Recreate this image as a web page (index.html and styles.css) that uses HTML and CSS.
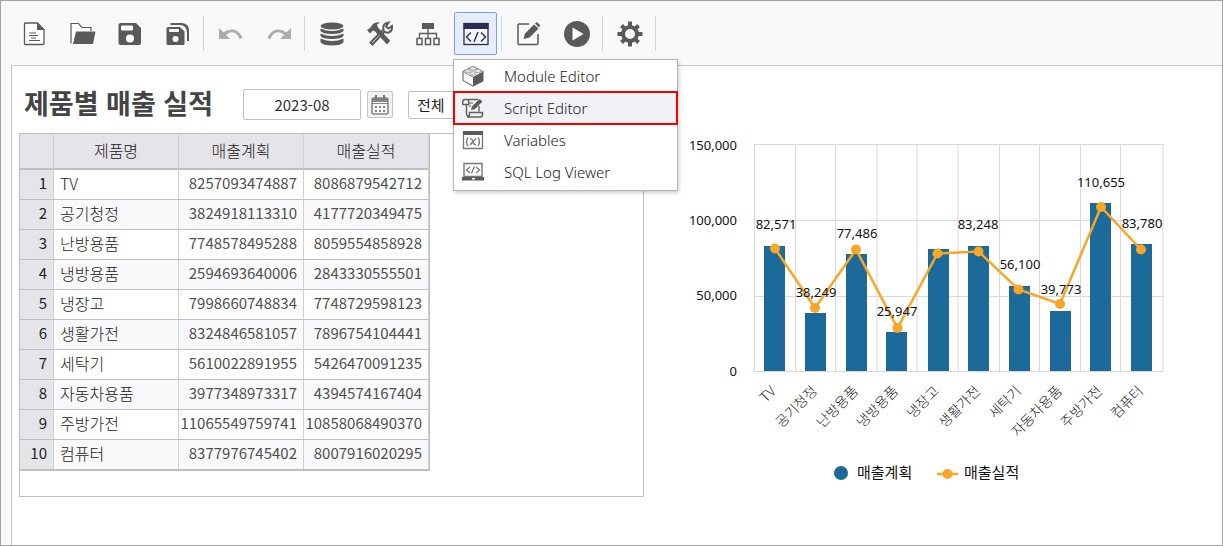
FILE: index.html
```
<!DOCTYPE html>
<html lang="ko">
<head>
  <meta charset="UTF-8" />
  <title>제품별 매출 실적</title>
  <link rel="stylesheet" href="styles.css">
</head>
<body>
  <!-- Toolbar -->
  <div class="toolbar">
    <div class="tool-group">
      <button class="tool" aria-label="New">
        <svg width="28" height="28" viewBox="0 0 28 28"><path d="M4.500 3h13l6.500 6.500v14q0 1-1 1H5.500q-1 0-1-1V4q0-1 1-1z" fill="#fff" stroke="#5a5a5a" stroke-width="1.300"/><path d="M17 3v7h7z" fill="#5a5a5a"/><path d="M9 13h7M9 15.500h9M11 18h5M9 20.500h11" stroke="#5a5a5a" stroke-width="1.200"/></svg>
      </button>
      <button class="tool" aria-label="Open">
        <svg width="28" height="28" viewBox="0 0 28 28"><path d="M3 23.500V3.500h7.500l3.500 4h9V11" fill="#fff" stroke="#5a5a5a" stroke-width="1.200"/><path d="M8 11.500H27.500L25 24H5z" fill="#5a5a5a"/></svg>
      </button>
      <button class="tool" aria-label="Save">
        <svg width="28" height="28" viewBox="0 0 28 28"><path d="M4.500 3H20l5 5v15q0 2-2 2H4.500q-2 0-2-2V5q0-2 2-2z" fill="#5a5a5a"/><rect x="5" y="5.500" width="12" height="5" rx="1" fill="#fff"/><circle cx="14" cy="18.500" r="4" fill="#fff"/></svg>
      </button>
      <button class="tool" aria-label="Save all">
        <svg width="28" height="28" viewBox="0 0 28 28"><path d="M6.500 3H18q7 1 7 7v11h-2v-9q-1-7-7-7H6.500z" fill="#5a5a5a"/><path d="M4 7h12l4.500 4.500V23.500q0 1.500-1.500 1.500H4q-1.500 0-1.500-1.500v-15Q2.500 7 4 7z" fill="#5a5a5a"/><rect x="5" y="9" width="10" height="3" rx="1" fill="#fff"/><circle cx="11.500" cy="19" r="3" fill="#fff"/></svg>
      </button>
    </div>
    <span class="divider"></span>
    <div class="tool-group">
      <button class="tool" aria-label="Undo" disabled>
        <svg width="28" height="28" viewBox="0 0 28 28"><path d="M2 8v11h11l-4-4q3-3.500 7.500-2.500 4 1 6 6.500l3-1q-3-7.500-9-8.500-5.500-.6-10 2.700z" fill="#adadad"/></svg>
      </button>
      <button class="tool" aria-label="Redo" disabled>
        <svg width="28" height="28" viewBox="0 0 28 28"><path d="M26 8v11H15l4-4q-3-3.500-7.500-2.500-4 1-6 6.500l-3-1q3-7.500 9-8.500 5.500-.6 10 2.700z" fill="#adadad"/></svg>
      </button>
    </div>
    <span class="divider"></span>
    <div class="tool-group">
      <button class="tool" aria-label="Database">
        <svg width="28" height="28" viewBox="0 0 28 28"><ellipse cx="14" cy="6" rx="11.500" ry="3.500" fill="#5a5a5a"/><path d="M2.500 8.500q11.500 5 23 0v2.500q-2 3-11.500 3T2.500 11zM2.500 13.500q11.500 5 23 0V16q-2 3-11.500 3T2.500 16zM2.500 18.500q11.500 5 23 0V22q-2 3.500-11.500 3.500T2.500 22z" fill="#5a5a5a"/></svg>
      </button>
      <button class="tool" aria-label="Tools">
        <svg width="28" height="28" viewBox="0 0 28 28"><path d="M1 10l3-2 3-4q3-2.500 7-1.500l-3 2 1 3 12 13-3 4-12-13-2-1-3 3z" fill="#5a5a5a"/><path d="M4.500 22.500l13-13q-1-4 2-6l3-.8-2.500 3.800 2.500 2 3.500-2.500q.5 4.500-2.500 6t-5-.500l-12 13z" fill="#fff" stroke="#5a5a5a" stroke-width="2"/><path d="M12 11l11 11" stroke="#5a5a5a" stroke-width="3"/></svg>
      </button>
      <button class="tool" aria-label="Structure">
        <svg width="28" height="28" viewBox="0 0 28 28"><rect x="8" y="3" width="12" height="6" fill="#5a5a5a"/><path d="M14 9v9M5.500 18v-4.500h17V18" fill="none" stroke="#5a5a5a" stroke-width="1.300"/><g fill="#fff" stroke="#5a5a5a" stroke-width="1.500"><rect x="3" y="18.500" width="5" height="6"/><rect x="11.500" y="18.500" width="5" height="6"/><rect x="20" y="18.500" width="5" height="6"/></g></svg>
      </button>
      <div class="tool-menu">
        <button class="tool active" aria-label="Code" aria-expanded="true">
          <svg width="28" height="28" viewBox="0 0 28 28"><rect x="2" y="3.500" width="24" height="21" fill="#f1f4fd" stroke="#2b2d4f" stroke-width="1.300"/><path d="M1.500 3h25v6h-25z" fill="#2b2d4f"/><path d="M9 12.500l-4.500 4.500L9 21.500M19 12.500l4.500 4.500-4.500 4.500M16 12l-4 10" fill="none" stroke="#2b2d4f" stroke-width="1.400"/></svg>
        </button>
        <ul class="menu">
          <li><button class="menu-item">
            <svg width="22" height="22" viewBox="0 0 22 22"><path d="M1 6.500l10-5 10 5v9.500L11 21 1 15.500z" fill="#fff" stroke="#777" stroke-width="1.200"/><path d="M11 12l10-5.500V16l-10 5z" fill="#5a5a5a"/><path d="M1 7l10 5" fill="none" stroke="#888"/><g fill="#e4e4e4" stroke="#999" stroke-width=".8"><ellipse cx="11" cy="3.500" rx="3" ry="1.800"/><ellipse cx="6" cy="6" rx="3" ry="1.800"/><ellipse cx="16" cy="6" rx="3" ry="1.800"/><ellipse cx="11" cy="8.500" rx="3" ry="1.800"/></g></svg>
            Module Editor</button></li>
          <li><button class="menu-item selected">
            <svg width="22" height="22" viewBox="0 0 22 22"><path d="M4.500 8V17q0 2 2.500 2h1M16 2.500H3Q.8 2.500.8 5v2.500h6V5q0-2.500-2-2.500M17 9v5.500M7.500 15.500V17q0 3-2.500 3h13.500q2 0 2-2.500v-2z" fill="none" stroke="#606060" stroke-width="1.400"/><path d="M9 13l1-3.500L17.500 2 20.500 4.500l-7.500 7.500z" fill="#5a5a5a"/><path d="M7 6h4M7 9h2" stroke="#606060" stroke-width="1.200"/></svg>
            Script Editor</button></li>
          <li><button class="menu-item">
            <svg width="22" height="22" viewBox="0 0 22 22"><path d="M1.500 3h19v16.500h-19z" fill="#fff" stroke="#777" stroke-width="1.300"/><path d="M1 2h20v4H1z" fill="#5a5a5a"/><path d="M6 8.500q-3 4.500 0 8.500M16 8.500q3 4.500 0 8.500M8 10q2-.5 2.500 1.500l1 2.500q.5 2 2.500 1.500M14 9.500L8 16" fill="none" stroke="#777" stroke-width="1.400"/></svg>
            Variables</button></li>
          <li><button class="menu-item">
            <svg width="22" height="22" viewBox="0 0 22 22"><path d="M2 2.500h18v13H2z" fill="#fff" stroke="#777" stroke-width="1.400"/><path d="M0 16h22v3.500H0z" fill="#5a5a5a"/><path d="M10 17h3v1.500h-3z" fill="#fff"/><path d="M8 6L4.500 9 8 12M14 6l3.500 3-3.500 3M12.500 5.500l-3 7" fill="none" stroke="#777" stroke-width="1.300"/></svg>
            SQL Log Viewer</button></li>
        </ul>
      </div>
    </div>
    <span class="divider"></span>
    <div class="tool-group">
      <button class="tool" aria-label="Edit">
        <svg width="28" height="28" viewBox="0 0 28 28"><path d="M14 4H4Q3 4 3 5v18.500q0 1 1 1h18q1 0 1-1V14" fill="none" stroke="#5a5a5a" stroke-width="1.500"/><path d="M8.500 19l1.500-5.500L19 4.500l4.500 4-9 9zM20 3.500l.8-.8q1-.8 2 0l1.800 1.800q.8 1 0 2l-.6 1z" fill="#5a5a5a"/></svg>
      </button>
      <button class="tool" aria-label="Run">
        <svg width="28" height="28" viewBox="0 0 28 28"><circle cx="14" cy="14" r="13" fill="#5a5a5a"/><path d="M9.500 7.500L20.500 14 9.500 20.500z" fill="#fff"/></svg>
      </button>
    </div>
    <span class="divider"></span>
    <div class="tool-group">
      <button class="tool" aria-label="Settings">
        <svg width="28" height="28" viewBox="0 0 28 28"><circle cx="14" cy="14" r="7" fill="none" stroke="#5a5a5a" stroke-width="4"/><path d="M14 1.500v5M14 21.500v5M1.500 14h5M21.500 14h5M5.500 5.500l3.500 3.500M19 19l3.500 3.500M5.500 22.500L9 19M19 9l3.500-3.500" stroke="#5a5a5a" stroke-width="4"/></svg>
      </button>
    </div>
    <span class="divider"></span>
  </div>

  <main class="report">
    <section class="sales">
      <div class="filters">
        <h1>제품별 매출 실적</h1>
        <input type="text" class="month" value="2023-08" aria-label="월" />
        <button class="calendar" aria-label="달력">
          <svg width="20" height="22" viewBox="0 0 20 22"><rect x="2" y="4" width="16" height="16" rx="1.500" fill="#f6f6f8" stroke="#858585" stroke-width="1.500"/><path d="M2 4h16v4H2z" fill="#858585"/><path d="M6 1v5M14 1v5" stroke="#777" stroke-width="2"/><path d="M2 9.500h16" stroke="#858585"/><path d="M5 13h10M5 17h10" stroke="#858585" stroke-width="2" stroke-dasharray="2 2"/></svg>
        </button>
        <select class="category" aria-label="분류">
          <option>전체</option>
        </select>
      </div>

      <div class="grid">
        <table>
          <thead>
            <tr><th class="num"></th><th>제품명</th><th>매출계획</th><th>매출실적</th></tr>
          </thead>
          <tbody>
            <tr><th>1</th><td class="name">TV</td><td>8257093474887</td><td>8086879542712</td></tr>
            <tr><th>2</th><td class="name">공기청정</td><td>3824918113310</td><td>4177720349475</td></tr>
            <tr><th>3</th><td class="name">난방용품</td><td>7748578495288</td><td>8059554858928</td></tr>
            <tr><th>4</th><td class="name">냉방용품</td><td>2594693640006</td><td>2843330555501</td></tr>
            <tr><th>5</th><td class="name">냉장고</td><td>7998660748834</td><td>7748729598123</td></tr>
            <tr><th>6</th><td class="name">생활가전</td><td>8324846581057</td><td>7896754104441</td></tr>
            <tr><th>7</th><td class="name">세탁기</td><td>5610022891955</td><td>5426470091235</td></tr>
            <tr><th>8</th><td class="name">자동차용품</td><td>3977348973317</td><td>4394574167404</td></tr>
            <tr><th>9</th><td class="name">주방가전</td><td>11065549759741</td><td>10858068490370</td></tr>
            <tr><th>10</th><td class="name">컴퓨터</td><td>8377976745402</td><td>8007916020295</td></tr>
          </tbody>
        </table>
      </div>
    </section>

    <!-- Plan / result chart -->
    <section class="chart">
      <svg viewBox="0 0 578 364" role="img" aria-label="매출계획, 매출실적">
        <g transform="translate(-644 -133)">
          <g class="gridlines">
            <path d="M754 144.500H1163M754 220.500H1163M754 296.500H1163M754 371.500H1163"/>
            <path d="M754.500 144V371M795.500 144V371M835.500 144V371M877 144V371M917 144V371M958 144V371M999.500 144V371M1039.500 144V371M1080.500 144V371M1120.500 144V371M1163 144V371"/>
          </g>
          <g class="bars">
            <rect x="764" y="246" width="21" height="125"/>
            <rect x="805" y="313" width="21" height="58"/>
            <rect x="846" y="254" width="21" height="117"/>
            <rect x="886" y="332" width="21" height="39"/>
            <rect x="928" y="249" width="21" height="122"/>
            <rect x="968" y="246" width="21" height="125"/>
            <rect x="1009" y="286" width="21" height="85"/>
            <rect x="1050" y="311" width="21" height="60"/>
            <rect x="1090" y="203" width="21" height="168"/>
            <rect x="1131" y="244" width="21" height="127"/>
          </g>
          <path class="line" d="M775 248.500L815 308L856 249.500L897.500 328L937.500 253.500L978.500 251.500L1018.500 289.500L1060 304L1101 207L1141 249.500"/>
          <g class="dots">
            <circle cx="775" cy="248.500" r="5"/>
            <circle cx="815" cy="308" r="5"/>
            <circle cx="856" cy="249.500" r="5"/>
            <circle cx="897.500" cy="328" r="5"/>
            <circle cx="937.500" cy="253.500" r="5"/>
            <circle cx="978.500" cy="251.500" r="5"/>
            <circle cx="1018.500" cy="289.500" r="5"/>
            <circle cx="1060" cy="304" r="5"/>
            <circle cx="1101" cy="207" r="5"/>
            <circle cx="1141" cy="249.500" r="5"/>
          </g>
          <g class="values">
            <text x="776" y="229">82,571</text>
            <text x="816" y="297">38,249</text>
            <text x="857" y="238">77,486</text>
            <text x="897" y="316">25,947</text>
            <text x="978" y="229">83,248</text>
            <text x="1020" y="269">56,100</text>
            <text x="1061" y="294">39,773</text>
            <text x="1101" y="187">110,655</text>
            <text x="1142" y="228">83,780</text>
          </g>
          <g class="axis">
            <text x="737" y="150">150,000</text>
            <text x="737" y="225">100,000</text>
            <text x="737" y="300">50,000</text>
            <text x="737" y="376">0</text>
          </g>
          <g class="names">
            <text transform="translate(777 392) rotate(-45)">TV</text>
            <text transform="translate(818 392) rotate(-45)">공기청정</text>
            <text transform="translate(859 392) rotate(-45)">난방용품</text>
            <text transform="translate(899 392) rotate(-45)">냉방용품</text>
            <text transform="translate(940 392) rotate(-45)">냉장고</text>
            <text transform="translate(981 392) rotate(-45)">생활가전</text>
            <text transform="translate(1022 392) rotate(-45)">세탁기</text>
            <text transform="translate(1063 392) rotate(-45)">자동차용품</text>
            <text transform="translate(1103 392) rotate(-45)">주방가전</text>
            <text transform="translate(1144 392) rotate(-45)">컴퓨터</text>
          </g>
          <g class="legend">
            <circle cx="841" cy="473" r="7" fill="#1b6a99"/>
            <text x="857" y="478">매출계획</text>
            <path class="line" d="M937 474H958"/>
            <circle cx="947.500" cy="474" r="5" fill="#f9a526"/>
            <text x="964" y="478">매출실적</text>
          </g>
        </g>
      </svg>
    </section>
  </main>
</body>
</html>
```
FILE: styles.css
```
* {
  box-sizing: border-box;
}
body {
  margin: 0;
  min-height: 100vh;
  display: flex;
  flex-direction: column;
  border: 1px solid #a3a3a3;
  background-color: #f9f9fc;
  color: #222;
  font-family: "Noto Sans CJK KR", sans-serif;
  font-size: 15px;
}
button,
input,
select {
  font-family: inherit;
  font-size: 15px;
}

/* toolbar */
.toolbar {
  display: flex;
  align-items: center;
  padding: 11px 11px 10px;
}
.tool-group {
  display: flex;
  gap: 5px;
}
.tool {
  display: flex;
  align-items: center;
  justify-content: center;
  width: 43px;
  height: 43px;
  padding: 0;
  border: 1px solid transparent;
  border-radius: 2px;
  background: none;
}
.tool.active {
  border-color: #7d9cf5;
  background-color: #e6edfd;
}
.divider {
  width: 1px;
  height: 35px;
  margin: 0 5px 0 4px;
  background-color: #d3d3d6;
}

/* drop-down menu */
.tool-menu {
  position: relative;
}
.menu {
  position: absolute;
  top: 47px;
  left: -1px;
  z-index: 1;
  width: 225px;
  margin: 0;
  padding: 0 0 2px;
  list-style: none;
  border: 1px solid #b5b5b8;
  background-color: #fff;
  box-shadow: 1px 2px 4px rgba(0, 0, 0, 0.2);
}
.menu-item {
  display: grid;
  grid-template-columns: 42px 1fr;
  align-items: center;
  width: 100%;
  height: 32px;
  padding: 0 8px;
  border: none;
  background: none;
  color: #222;
  font-family: "Noto Sans", sans-serif;
  font-weight: 300;
  text-align: left;
}
.menu-item.selected {
  background-color: #f2f1f6;
  outline: 2px solid #f40000;
  outline-offset: -1px;
}

/* report */
.report {
  flex: 1;
  display: flex;
  align-items: flex-start;
  margin-left: 10px;
  padding-left: 7px;
  border-top: 1px solid #c6c6ca;
  border-left: 1px solid #c6c6ca;
  background-color: #fff;
}
.sales {
  flex: 0 0 625px;
}
.filters {
  display: flex;
  align-items: center;
  height: 67px;
  padding: 10px 0 0 5px;
}
h1 {
  flex: 0 0 219px;
  margin: 0;
  padding-bottom: 4px;
  color: #444;
  font-size: 27px;
  line-height: 32px;
}
.month {
  width: 118px;
  height: 31px;
  border: 1px solid #bfbfbf;
  border-radius: 2px;
  color: #333;
  text-align: center;
}
.calendar {
  display: flex;
  align-items: center;
  justify-content: center;
  width: 26px;
  height: 27px;
  margin: 0 15px 0 6px;
  padding: 0;
  border: 1px solid #c4c4c8;
  border-radius: 2px;
  background-color: #f1f1f4;
}
.category {
  width: 120px;
  height: 28px;
  padding: 0 8px;
  border: 1px solid #bfbfbf;
  border-radius: 2px;
  background-color: #fff;
  color: #222;
  appearance: none;
}

.grid {
  height: 364px;
  border: 1px solid #bfbfc3;
}
table {
  width: 410px;
  table-layout: fixed;
  border-collapse: separate;
  border-spacing: 0;
  border-right: 1px solid #bfbfc3;
  border-bottom: 1px solid #bfbfc3;
}
th,
td {
  height: 30px;
  padding: 0 6px 3px 0;
  border-right: 1px solid #d0d0d3;
  border-bottom: 1px solid #bfbfc3;
  line-height: 22px;
}
th {
  background-color: #e5e4e9;
  color: #222;
  font-weight: normal;
  text-align: right;
}
thead th {
  height: 36px;
  padding: 0 0 3px;
  border-bottom-width: 2px;
  font-size: 16px;
  font-weight: 300;
  text-align: center;
}
.num {
  width: 34px;
}
td {
  color: #505050;
  text-align: right;
}
.name {
  padding-left: 6px;
  color: #222;
  font-size: 16px;
  font-weight: 300;
  text-align: left;
}
tbody tr:nth-child(even) td {
  background-color: #f9f9fc;
}

/* chart */
.chart {
  flex: 1;
  padding-top: 67px;
}
.chart svg {
  display: block;
  width: 100%;
}
.gridlines {
  fill: none;
  stroke: #d9d9d9;
}
.bars {
  fill: #1b6a99;
}
.line {
  fill: none;
  stroke: #f9a526;
  stroke-width: 2.5px;
}
.dots {
  fill: #f9a526;
}
.values,
.axis {
  fill: #111;
  font-family: "Noto Sans", sans-serif;
  font-size: 13px;
}
.values {
  text-anchor: middle;
}
.axis {
  text-anchor: end;
}
.names {
  fill: #222;
  font-size: 14px;
  font-weight: 300;
  text-anchor: end;
}
.legend {
  fill: #111;
  font-size: 15px;
}
```
